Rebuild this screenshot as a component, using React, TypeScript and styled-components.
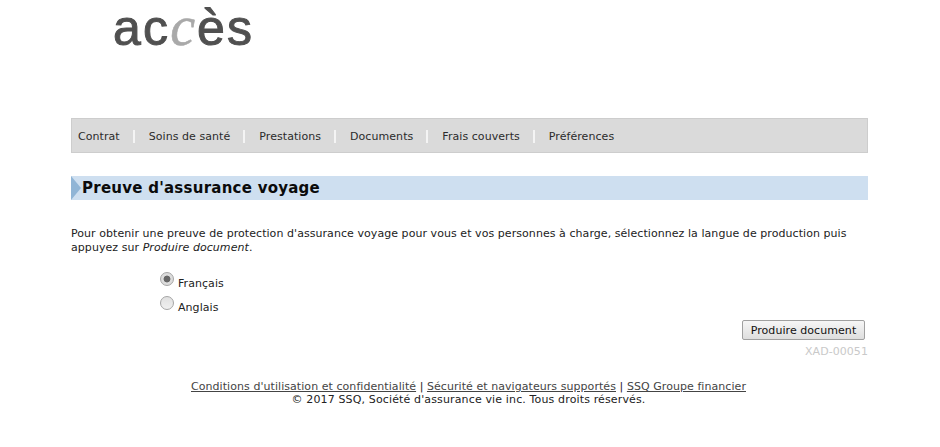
import React from "react";
import styled, { createGlobalStyle } from "styled-components";

const Global = createGlobalStyle`
  html, body { margin: 0; padding: 0; background: #fff; }
  body { font-family: "DejaVu Sans", Verdana, sans-serif; font-size: 11px; color: #222; letter-spacing: 0.06px; }
`;

const Page = styled.div`
  width: 940px;
  height: 447px;
  overflow: hidden;
  padding: 0 72px 0 71px;
  box-sizing: border-box;
`;

const Header = styled.header`
  height: 118px;
  padding-left: 42px;
  box-sizing: border-box;
`;

const Logo = styled.div`
  display: flex;
  align-items: baseline;
  height: 60px;
  font-family: "Liberation Sans", Arial, sans-serif;
  font-size: 50px;
  line-height: 52px;
  color: #505050;
  letter-spacing: 2.2px;
  -webkit-text-stroke: 1px #505050;
`;

const LogoAccent = styled.span`
  font-family: "Liberation Serif", serif;
  font-style: italic;
  color: #a9a9a9;
  -webkit-text-stroke: 0.6px #a9a9a9;
  font-size: 56px;
  letter-spacing: 0;
  margin-right: 2px;
`;

const Nav = styled.nav`
  display: flex;
  align-items: center;
  height: 35px;
  box-sizing: border-box;
  background: #dadada;
  border: 1px solid #cdcdcd;
  padding: 2px 0 0 6px;
`;

const NavItem = styled.a<{ $last?: boolean }>`
  color: #2b2b2b;
  font-size: 11px;
  line-height: 13px;
  padding-right: 13px;
  margin-right: 14px;
  border-right: ${(p) => (p.$last ? "0" : "2px solid #f4f4f4")};
`;

const TitleBar = styled.div`
  position: relative;
  margin-top: 23px;
  height: 24px;
  background: #cedff0;
  padding-left: 11px;
  font-size: 15px;
  font-weight: bold;
  line-height: 24px;
  letter-spacing: 0.25px;
  color: #0b0b0b;
  &::before {
    content: "";
    position: absolute;
    left: 0;
    top: 0;
    border-left: 10px solid #90b5d6;
    border-top: 12px solid transparent;
    border-bottom: 12px solid transparent;
  }
`;

const Intro = styled.p`
  margin: 27px 0 0;
  font-size: 11px;
  line-height: 14px;
  color: #222;
`;

const Options = styled.div`
  display: flex;
  flex-direction: column;
  gap: 8px;
  margin: 20px 0 0 89px;
`;

const Option = styled.label`
  display: flex;
  align-items: center;
  gap: 4px;
  height: 16px;
  color: #222;
`;

const Radio = styled.span<{ $checked?: boolean }>`
  width: 14px;
  height: 14px;
  box-sizing: border-box;
  border-radius: 50%;
  border: 1px solid #a5a5a5;
  background: ${(p) => (p.$checked ? "radial-gradient(circle, #666 0 3px, #dcdcdc 3.8px)" : "linear-gradient(#e0e0e0, #f0f0f0)")};
  margin-top: -8px;
`;

const Actions = styled.div`
  display: flex;
  justify-content: flex-end;
  margin-top: 5px;
  padding-right: 3px;
`;

const Button = styled.button`
  width: 123px;
  height: 20px;
  padding: 0;
  box-sizing: border-box;
  font-family: inherit;
  font-size: 11px;
  letter-spacing: 0.06px;
  color: #111;
  background: linear-gradient(#f6f6f6, #dedede);
  border: 1px solid #a0a0a0;
  border-radius: 2px;
`;

const Code = styled.div`
  text-align: right;
  margin-top: 5px;
  line-height: 14px;
  font-size: 11px;
  color: #c9c9c9;
`;

const Footer = styled.footer`
  margin-top: 21px;
  padding-right: 2px;
  text-align: center;
  line-height: 13px;
  color: #222;
`;

const FooterLink = styled.a`
  color: #444;
  text-decoration: underline;
`;

const Copyright = styled.div`
  letter-spacing: 0.14px;
`;

const items = ["Contrat", "Soins de santé", "Prestations", "Documents", "Frais couverts", "Préférences"];

export default function App() {
  return (
    <Page>
      <Global />
      <Header>
        <Logo>
          ac<LogoAccent>c</LogoAccent>ès
        </Logo>
      </Header>
      <Nav>
        {items.map((t, i) => (
          <NavItem key={t} $last={i === items.length - 1}>{t}</NavItem>
        ))}
      </Nav>
      <TitleBar>Preuve d'assurance voyage</TitleBar>
      <Intro>
        Pour obtenir une preuve de protection d'assurance voyage pour vous et vos personnes à charge, sélectionnez la langue de production puis appuyez sur <em>Produire document</em>.
      </Intro>
      <Options>
        <Option><Radio $checked />Français</Option>
        <Option><Radio />Anglais</Option>
      </Options>
      <Actions>
        <Button>Produire document</Button>
      </Actions>
      <Code>XAD-00051</Code>
      <Footer>
        <FooterLink>Conditions d'utilisation et confidentialité</FooterLink> | <FooterLink>Sécurité et navigateurs supportés</FooterLink> | <FooterLink>SSQ Groupe financier</FooterLink>
        <Copyright>© 2017 SSQ, Société d'assurance vie inc. Tous droits réservés.</Copyright>
      </Footer>
    </Page>
  );
}
